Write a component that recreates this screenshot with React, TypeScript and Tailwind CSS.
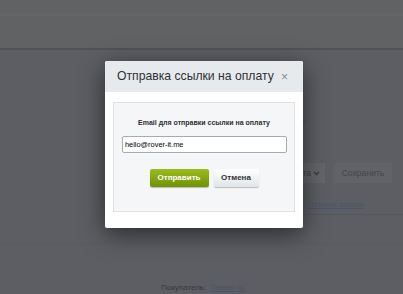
import React, { useState } from "react";

function PaymentLinkDialog({ onClose }: { onClose: () => void }) {
  const [email, setEmail] = useState("hello@rover-it.me");

  return (
    <div className="absolute left-[105px] top-[61px] w-[198px] h-[167px] bg-white rounded-[2px] shadow-[0_6px_24px_rgba(0,0,0,0.55)] flex flex-col">
      <div className="h-[31px] bg-[#e6eaed] flex items-center justify-between pl-[12px] pr-[15px] rounded-t-[2px]">
        <span className="text-[12.2px] text-[#2f3134] whitespace-nowrap">
          Отправка ссылки на оплату
        </span>
        <button onClick={onClose} className="text-[12px] leading-none text-[#858a8f]">
          ×
        </button>
      </div>
      <div className="px-[8px] pt-[10px] pb-[16px] flex-1 flex">
        <div className="flex-1 border border-[#dde2e5] bg-[#f4f6f7] flex flex-col items-center">
          <div className="mt-[15px] text-[7px] leading-[9px] font-bold text-[#2e3033] whitespace-nowrap">
            Email для отправки ссылки на оплату
          </div>
          <input
            type="text"
            value={email}
            onChange={(e) => setEmail(e.target.value)}
            className="mt-[9px] ml-[1px] w-[165px] h-[17px] border border-[#a5abb0] rounded-[2px] bg-white px-[2px] text-[7.4px] text-black outline-none"
          />
          <div className="mt-[16px] flex gap-[5px]">
            <button className="w-[59px] h-[18px] rounded-[2px] bg-gradient-to-b from-[#9cbb1c] to-[#6f9305] text-white text-[8px] font-bold shadow-[0_1px_1px_rgba(0,0,0,0.25)]">
              Отправить
            </button>
            <button
              onClick={onClose}
              className="w-[45px] h-[18px] rounded-[2px] bg-gradient-to-b from-white to-[#e1e5e8] text-[#333] text-[8px] font-bold shadow-[0_1px_1px_rgba(0,0,0,0.25)]"
            >
              Отмена
            </button>
          </div>
        </div>
      </div>
    </div>
  );
}

function App() {
  const [open, setOpen] = useState(true);

  return (
    <div className="relative w-[403px] h-[294px] overflow-hidden bg-[#5c5e63] font-['Liberation_Sans',Arial,sans-serif]">
      <div className="h-[48px] bg-[#616264] pt-[14px]">
        <div className="h-[2px] bg-[#646567]" />
      </div>
      <div className="h-[2px] bg-[#505256]" />
      <div className="flex flex-col">
        <div className="h-[65px]" />
        <div className="flex pl-[270px] h-[14px]">
          <span className="text-[8px] text-[#4b5569] underline">Изменить</span>
        </div>
        <div className="h-[34px]" />
        <div className="flex items-center pl-[250px] gap-[9px] h-[20px]">
          <div className="w-[75px] h-[20px] bg-[#636569] flex items-center justify-end pr-[5px] gap-[2px] text-[8.5px] text-[#3f4043]">
            Оплата
            <svg width="7" height="5" viewBox="0 0 7 5">
              <path d="M1 1l2.5 2.5L6 1" stroke="#3a3b3e" strokeWidth="1.4" fill="none" />
            </svg>
          </div>
          <div className="w-[58px] h-[20px] bg-[#616368] flex items-center justify-center text-[8.6px] text-[#44464a]">
            Сохранить
          </div>
        </div>
        <div className="h-[16px]" />
        <div className="flex pl-[308px] h-[12px]">
          <span className="text-[8px] text-[#4b5569] underline">Отмена заказа</span>
        </div>
        <div className="h-[3px]" />
        <div className="ml-[303px] h-[1px] bg-[#55575b]" />
        <div className="h-[28px]" />
        <div className="h-[1px] bg-[#595b60]" />
        <div className="h-[38px]" />
        <div className="flex pl-[161px] gap-[5px] text-[8px]">
          <span className="text-[#38393c]">Покупатель:</span>
          <span className="text-[#4b5569] underline">Павел Ш.</span>
        </div>
      </div>
      {open && <PaymentLinkDialog onClose={() => setOpen(false)} />}
    </div>
  );
}

export default App;
